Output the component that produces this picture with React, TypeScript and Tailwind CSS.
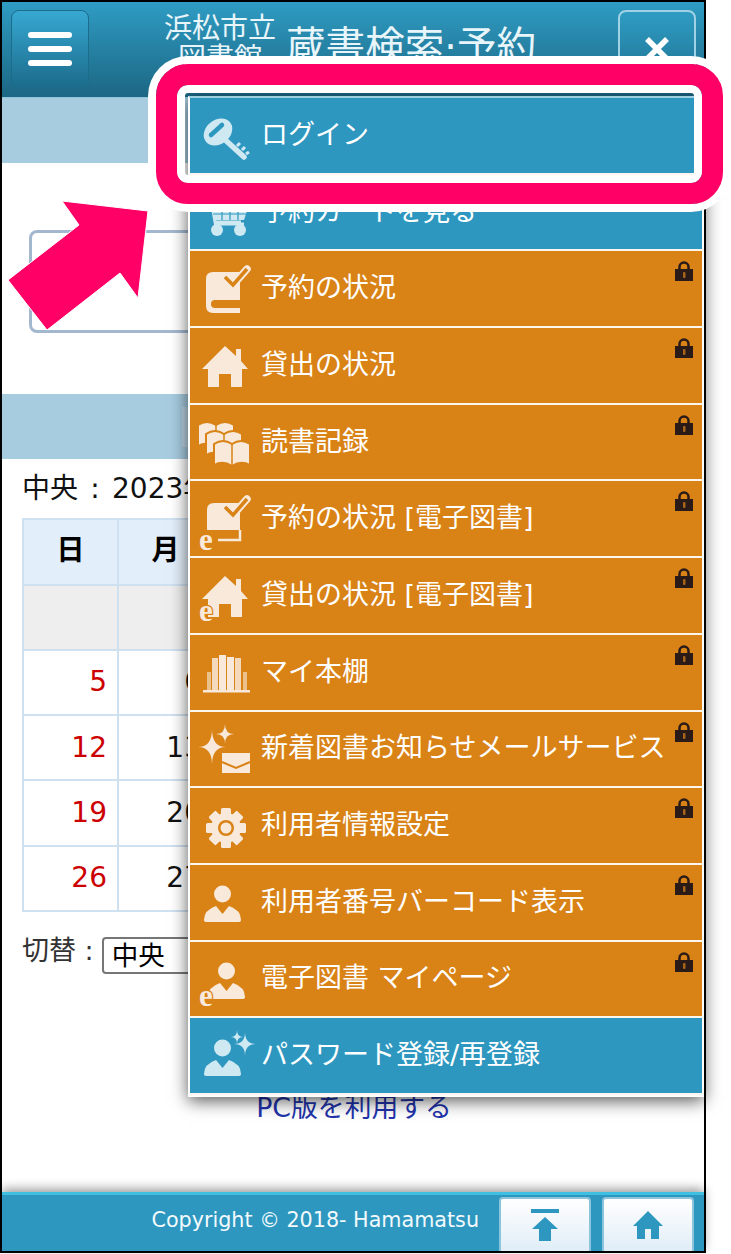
import React from "react";

const CREAM = "#f8e9da";
const ICE = "#cfe9f3";
const ORANGE = "#d98216";
const BLUE = "#2d97bf";
const FONT = '"DejaVu Sans", "Noto Sans CJK JP", sans-serif';

type IconProps = { c: string; bg: string };

const sparkle = (x: number, y: number, rx: number, ry: number) =>
  `M${x} ${y - ry}Q${x} ${y} ${x + rx} ${y}Q${x} ${y} ${x} ${y + ry}Q${x} ${y} ${x - rx} ${y}Q${x} ${y} ${x} ${y - ry}Z`;

const Svg = ({ children }: { children: React.ReactNode }) => (
  <svg width="56" height="56" viewBox="0 0 56 56" className="shrink-0 overflow-visible">
    {children}
  </svg>
);

const E = ({ x, y, c, bg }: { x: number; y: number; c: string; bg: string }) => (
  <text
    x={x}
    y={y}
    fill={c}
    stroke={bg}
    strokeWidth="2.5"
    paintOrder="stroke"
    fontSize="31"
    fontWeight="700"
    fontFamily='"Liberation Serif", serif'
  >
    e
  </text>
);

const Key = ({ c, bg }: IconProps) => (
  <Svg>
    <path d="M26 30L48 50" stroke={c} strokeWidth="5.5" strokeLinecap="round" />
    <path d="M41 39l3-3M46 43l3-3M50 47l3-2" stroke={c} strokeWidth="3" />
    <ellipse cx="22" cy="25" rx="15.5" ry="12" transform="rotate(-38 22 25)" fill={c} />
    <path d="M15 28L26 18" stroke={bg} strokeWidth="4.5" strokeLinecap="round" />
  </Svg>
);

const Cart = ({ c }: IconProps) => (
  <Svg>
    <path d="M9 21h7l3 17h26" stroke={c} strokeWidth="3" fill="none" />
    <path d="M16 24h36l-4 12H19z" fill={c} />
    <path d="M26 24v12M34 24v12M42 24v12M17 30h33" stroke={BLUE} strokeWidth="1.2" />
    <path d="M18 40h30" stroke={c} strokeWidth="3" />
    <circle cx="21" cy="46" r="6" fill={c} />
    <circle cx="44" cy="46" r="6" fill={c} />
  </Svg>
);

const Check = ({ c, bg }: IconProps) => (
  <>
    <path d="M29 16L37 24L51 8" stroke={c} strokeWidth="7.5" fill="none" strokeLinecap="round" />
    <path d="M29 16L37 24L51 8" stroke={bg} strokeWidth="3.5" fill="none" />
  </>
);

const Book = ({ c, bg }: IconProps) => (
  <Svg>
    <path d="M17 11H44V52H17Q10 52 10 45V18Q10 11 17 11Z" fill={c} />
    <path d="M44 39H19Q15 39 15 43T19 47H44Z" fill={bg} />
    <Check c={c} bg={bg} />
  </Svg>
);

const EBook = ({ c, bg }: IconProps) => (
  <Svg>
    <path d="M18 12H44V39H11V19Q11 12 18 12Z" fill={c} />
    <path d="M22 49H44V39" stroke={c} strokeWidth="2.5" fill="none" />
    <Check c={c} bg={bg} />
    <E x={3} y={59} c={c} bg={bg} />
  </Svg>
);

const housePath = "M29 9L40 19V12H45V24L52 32H46V50H35V37H23V50H12V32H6Z";

const Home = ({ c }: IconProps) => (
  <Svg>
    <path d={housePath} fill={c} />
  </Svg>
);

const EHome = ({ c, bg }: IconProps) => (
  <Svg>
    <path d={housePath} fill={c} />
    <E x={3} y={54} c={c} bg={bg} />
  </Svg>
);

const openBook = "M0 3Q9-3 18 3Q27-3 36 3V24Q27 19 18 25Q9 19 0 24Z";

const Books = ({ c, bg }: IconProps) => (
  <Svg>
    {[
      [2, 8],
      [10, 17],
      [18, 27],
    ].map(([x, y]) => (
      <g key={x} transform={`translate(${x} ${y})`}>
        <path d={openBook} fill={c} stroke={bg} strokeWidth="2" />
        <path d="M18 3V25" stroke={bg} strokeWidth="1.5" />
      </g>
    ))}
  </Svg>
);

const Shelf = ({ c }: IconProps) => (
  <Svg>
    <rect x="7" y="46" width="47" height="2.5" fill={c} />
    {[
      [11, 28, 4, 0.6],
      [16, 14, 6, 0.85],
      [23, 11, 7, 1],
      [31, 13, 7, 1],
      [39, 14, 6, 0.85],
      [47, 28, 4, 0.6],
    ].map(([x, y, w, o]) => (
      <rect key={x} x={x} y={y} width={w} height={47 - y} fill={c} opacity={o} />
    ))}
  </Svg>
);

const Notice = ({ c, bg }: IconProps) => (
  <Svg>
    <path d={sparkle(16, 26, 14, 18)} fill={c} />
    <path d={sparkle(29, 13, 9, 10)} fill={c} />
    <rect x="26" y="32" width="28" height="20" fill={c} />
    <path d="M26 41L40 47L54 41" stroke={bg} strokeWidth="2" fill="none" />
  </Svg>
);

const Gear = ({ c, bg }: IconProps) => (
  <Svg>
    {[0, 45, 90, 135].map((r) => (
      <rect key={r} x="25" y="10" width="10" height="40" rx="1.5" fill={c} transform={`rotate(${r} 30 30)`} />
    ))}
    <circle cx="30" cy="30" r="15" fill={c} />
    <circle cx="30" cy="30" r="8" fill={bg} />
    <circle cx="30" cy="30" r="5.5" fill={c} />
  </Svg>
);

const UserShape = ({ x, c }: { x: number; c: string }) => (
  <g transform={`translate(${x} 0)`}>
    <circle cx="18.5" cy="20" r="8.5" fill={c} />
    <path d="M0 46Q0 36 12 32L18.5 40L25 32Q37 36 37 46Q37 48 34 48H3Q0 48 0 46Z" fill={c} />
  </g>
);

const User = ({ c }: IconProps) => (
  <Svg>
    <UserShape x={8} c={c} />
  </Svg>
);

const EUser = ({ c, bg }: IconProps) => (
  <Svg>
    <UserShape x={12} c={c} />
    <E x={3} y={55} c={c} bg={bg} />
  </Svg>
);

const UserStar = ({ c }: IconProps) => (
  <Svg>
    <UserShape x={8} c={c} />
    <path d={sparkle(49, 16, 11, 12)} fill={c} />
    <path d={sparkle(41, 9, 6, 7)} fill={c} />
  </Svg>
);

const Lock = () => (
  <svg width="18" height="20" viewBox="0 0 18 20" className="absolute top-[10px] right-[9px]">
    <path d="M4.5 9V6a4.5 4.5 0 0 1 9 0v3" stroke="#2a1a18" strokeWidth="2.5" fill="none" />
    <rect y="8" width="18" height="12" fill="#2a1a18" />
    <rect x="8" y="11" width="2.5" height="6" rx="1" fill="#a8651a" />
  </svg>
);

const items: { label: string; Icon: (p: IconProps) => React.ReactElement; tone: "blue" | "orange" }[] = [
  { label: "ログイン", Icon: Key, tone: "blue" },
  { label: "予約カートを見る", Icon: Cart, tone: "blue" },
  { label: "予約の状況", Icon: Book, tone: "orange" },
  { label: "貸出の状況", Icon: Home, tone: "orange" },
  { label: "読書記録", Icon: Books, tone: "orange" },
  { label: "予約の状況 [電子図書]", Icon: EBook, tone: "orange" },
  { label: "貸出の状況 [電子図書]", Icon: EHome, tone: "orange" },
  { label: "マイ本棚", Icon: Shelf, tone: "orange" },
  { label: "新着図書お知らせメールサービス", Icon: Notice, tone: "orange" },
  { label: "利用者情報設定", Icon: Gear, tone: "orange" },
  { label: "利用者番号バーコード表示", Icon: User, tone: "orange" },
  { label: "電子図書 マイページ", Icon: EUser, tone: "orange" },
  { label: "パスワード登録/再登録", Icon: UserStar, tone: "blue" },
];

const weeks = [
  ["", "", "", "1", "2", "3", "4"],
  ["5", "6", "7", "8", "9", "10", "11"],
  ["12", "13", "14", "15", "16", "17", "18"],
  ["19", "20", "21", "22", "23", "24", "25"],
  ["26", "27", "28", "29", "30", "31", ""],
];

const days = ["日", "月", "火", "水", "木", "金", "土"];

export default function App() {
  return (
    <div
      className="relative w-[731px] h-[1254px] bg-white overflow-hidden text-black"
      style={{ fontFamily: FONT }}
    >
      <div className="relative flex flex-col w-[706px] h-[1253px] border-2 border-black">
        <header className="flex items-start justify-between h-[96px] shrink-0 pt-2 pl-[9px] pr-2 bg-gradient-to-b from-[#2f9cc3] to-[#1c6784] border-b border-[#8fc4d8]">
          <button className="flex flex-col items-center justify-center gap-[8px] w-[78px] h-[78px] rounded-lg border border-[#1c6c8c] bg-gradient-to-b from-[#37a8d2] to-[#1c6c8c]">
            <span className="block w-[44px] h-[6px] rounded-sm bg-white" />
            <span className="block w-[44px] h-[6px] rounded-sm bg-white" />
            <span className="block w-[44px] h-[6px] rounded-sm bg-white" />
          </button>
          <div className="flex items-start text-[#e8f5fa] ml-[74px] mr-auto">
            <div className="w-[114px] text-center text-[28px] leading-[30px] pt-[4px]">
              浜松市立
              <br />
              図書館
            </div>
            <div className="text-[39.6px] leading-[44px] pt-[14px] ml-[9px] whitespace-nowrap">蔵書検索·予約</div>
          </div>
          <button className="flex items-center justify-center w-[78px] h-[78px] rounded-lg border-2 border-[#9fd2e4] bg-gradient-to-b from-[#2f9cc3] to-[#1f7292]">
            <svg width="26" height="26" viewBox="0 0 26 26">
              <path d="M3 3L23 23M23 3L3 23" stroke="white" strokeWidth="5.5" />
            </svg>
          </button>
        </header>

        <div className="h-[65px] shrink-0 bg-[#a7cbdf]" />

        <div className="mt-[67px] mx-[27px] h-[103px] shrink-0 rounded-lg border-[3px] border-[#a3b8cf]" />

        <div className="relative mt-[61px] h-[65px] shrink-0 bg-[#a7cbdf]">
          <span className="absolute left-[180px] top-[13px] w-[10px] h-[40px] bg-[#bcd4e3]" />
        </div>

        <div className="h-[59px] shrink-0 flex items-center pl-[20px] text-[28px] leading-none text-[#111] whitespace-nowrap">
          中央<span className="w-[34px] text-center">:</span>2023年3月
        </div>

        <table className="ml-[20px] w-[667px] table-fixed border-collapse shrink-0">
          <thead>
            <tr className="h-[65.5px]">
              {days.map((d) => (
                <th key={d} className="border-2 border-[#cfe0f0] bg-[#e2eef9] text-[28px] font-bold text-center pb-[1px]">
                  {d}
                </th>
              ))}
            </tr>
          </thead>
          <tbody>
            {weeks.map((w, i) => (
              <tr key={i} className="h-[65.3px]">
                {w.map((n, j) => (
                  <td
                    key={j}
                    className={`border-2 border-[#cfe0f0] text-right pr-[10px] text-[28px] ${n === "" ? "bg-[#eeeeee]" : ""} ${j === 0 ? "text-[#cc0000]" : "text-[#111]"}`}
                  >
                    {n}
                  </td>
                ))}
              </tr>
            ))}
          </tbody>
        </table>

        <div className="flex items-center mt-[25px] ml-[20px] h-[37px] shrink-0 text-[27px] text-[#333]">
          <span className="-mt-[8px]">切替 :</span>
          <select
            defaultValue="中央"
            className="ml-[8px] w-[150px] h-[37px] pl-[4px] rounded border-2 border-[#767676] bg-white text-[26.5px] text-black"
          >
            <option>中央</option>
          </select>
        </div>

        <a className="mt-[114px] ml-[2px] h-[40px] shrink-0 self-center text-[26.8px] leading-[40px] text-[#2233aa]">
          PC版を利用する
        </a>

        <footer className="mt-auto flex items-end justify-end h-[59px] shrink-0 pr-[10px] gap-[11px] bg-[#2d97bf] border-t-[3px] border-[#3fc0e2] shadow-[0_-3px_10px_rgba(0,0,0,0.4)]">
          <span className="self-center mb-[5px] mr-[9px] text-[20.7px] leading-none text-[#f2fafd] whitespace-nowrap">
            Copyright © 2018- Hamamatsu
          </span>
          <button className="flex items-center justify-center w-[92px] h-[54px] rounded-t border-2 border-b-0 border-[#8cc4dc] bg-gradient-to-b from-white to-[#e0edf7]">
            <svg width="28" height="32" viewBox="0 0 28 32">
              <rect width="28" height="4" fill="#2d97bf" />
              <path d="M14 8L27 20H20V32H8V20H1Z" fill="#2d97bf" />
            </svg>
          </button>
          <button className="flex items-center justify-center w-[92px] h-[54px] rounded-t border-2 border-b-0 border-[#8cc4dc] bg-gradient-to-b from-white to-[#e0edf7]">
            <svg width="30" height="28" viewBox="0 0 30 28">
              <path d="M15 0L30 15H26V28H18V18H12V28H4V15H0Z" fill="#2d97bf" />
            </svg>
          </button>
        </footer>
      </div>

      <nav className="absolute left-[188px] top-[96px] w-[516px] border-x-2 border-b-2 border-t-2 border-x-white border-b-white border-t-[#9fd0e0] bg-white shadow-[0_4px_16px_rgba(0,0,0,0.65)]">
        {items.map(({ label, Icon, tone }) => {
          const blue = tone === "blue";
          const bg = blue ? BLUE : ORANGE;
          const c = blue ? ICE : CREAM;
          return (
            <div
              key={label}
              className={`relative flex items-center h-[76.7px] border-b-2 border-[#fdf6ee] pl-[6px] ${blue ? "bg-[#2d97bf]" : "bg-[#d98216]"}`}
            >
              <Icon c={c} bg={bg} />
              <span className="ml-[9px] -mt-[2px] text-[27px] leading-none text-white whitespace-nowrap">{label}</span>
              {!blue && <Lock />}
            </div>
          );
        })}
      </nav>

      <div className="absolute left-[156px] top-[64px] w-[567px] h-[140px] rounded-[32px] border-[21px] border-[#ff0066] shadow-[0_0_0_8px_white,inset_0_0_0_8px_white]" />

      <svg width="160" height="140" viewBox="0 0 160 140" className="absolute left-0 top-[196px]">
        <path d="M62 5L148 15L138 102L120 77L47 134L8 84L79 29Z" fill="#ff0066" stroke="white" strokeWidth="1" />
      </svg>
    </div>
  );
}
